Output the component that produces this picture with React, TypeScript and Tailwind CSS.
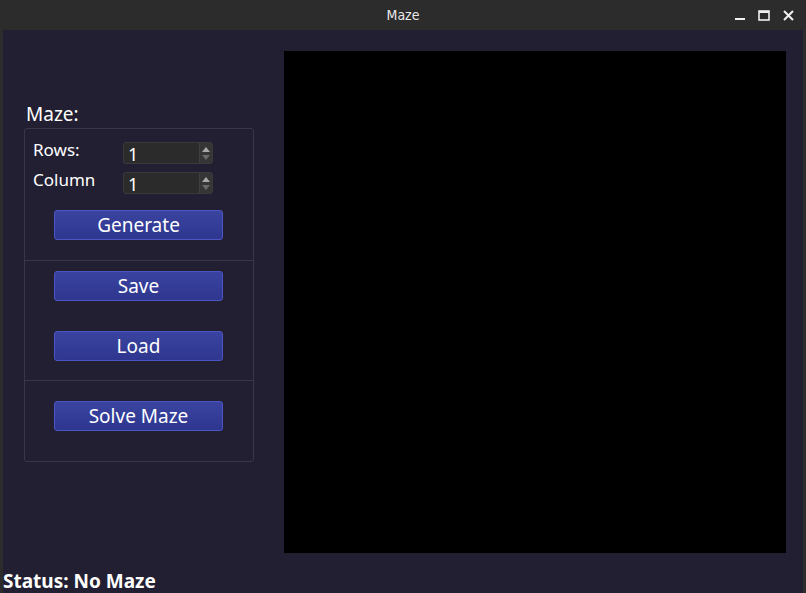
import React from "react";

const font = { fontFamily: '"Noto Sans", "Open Sans", sans-serif' };

function SpinBox({ value }: { value: number }) {
  return (
    <div className="flex h-[22px] w-[90px] rounded-[3px] border border-[#3a3a3a] bg-[#2b2b2b]">
      <div className="flex flex-1 items-center pl-[4px] pt-[2px] text-[18px] leading-none text-white">{value}</div>
      <div className="flex w-[13px] flex-col items-center justify-center gap-[3px] border-l border-[#3f3f3f] bg-[#353535]">
        <svg width="8" height="5" viewBox="0 0 8 5">
          <polygon points="0,5 4,0 8,5" fill="#a8a8a8" />
        </svg>
        <svg width="8" height="5" viewBox="0 0 8 5">
          <polygon points="0,0 8,0 4,5" fill="#6a6a6a" />
        </svg>
      </div>
    </div>
  );
}

function Button({ label }: { label: string }) {
  return (
    <button className="ml-[29px] h-[30px] w-[169px] rounded-[3px] border border-[#4b56c4] bg-gradient-to-b from-[#3a44a0] to-[#2e368f] text-[19px] leading-none text-white">
      {label}
    </button>
  );
}

export default function App() {
  return (
    <div className="flex h-[593px] w-[806px] flex-col overflow-hidden bg-[#2c2c2c]" style={font}>
      <div className="relative flex h-[30px] items-center justify-center">
        <span className="text-[14px] text-[#e8e8e8]" style={{ fontFamily: '"DejaVu Sans Condensed", "DejaVu Sans", sans-serif' }}>
          Maze
        </span>
        <div className="absolute right-[12px] top-[10px] flex items-end gap-[13px]">
          <svg width="10" height="11" viewBox="0 0 10 11">
            <rect x="0" y="8" width="10" height="2" fill="#f0f0f0" />
          </svg>
          <svg width="12" height="11" viewBox="0 0 12 11">
            <rect x="1" y="1" width="10" height="9" fill="none" stroke="#f0f0f0" strokeWidth="1.6" />
            <rect x="1" y="1" width="10" height="2" fill="#f0f0f0" />
          </svg>
          <svg width="11" height="11" viewBox="0 0 11 11">
            <path d="M1 1 L10 10 M10 1 L1 10" stroke="#f0f0f0" strokeWidth="2" />
          </svg>
        </div>
      </div>
      <div className="mx-[3px] flex flex-1 flex-col bg-[#231f33]">
        <div className="flex flex-1">
          <div className="ml-[21px] flex w-[230px] flex-col pt-[72px]">
            <div className="h-[26px] pl-[2px] text-[19px] leading-[24px] text-white">Maze:</div>
            <div className="flex flex-col rounded-[3px] border border-[#3a3646]">
              <div className="flex h-[132px] flex-col border-b border-[#3a3646] pt-[13px]">
                <div className="flex h-[22px] items-start">
                  <span className="-mt-[1px] w-[98px] pl-[8px] text-[17px] leading-[18px] text-white">Rows:</span>
                  <SpinBox value={1} />
                </div>
                <div className="mt-[8px] flex h-[22px] items-start">
                  <span className="-mt-[1px] w-[98px] pl-[8px] text-[17px] leading-[18px] text-white">Column</span>
                  <SpinBox value={1} />
                </div>
                <div className="mt-[16px]">
                  <Button label="Generate" />
                </div>
              </div>
              <div className="flex h-[120px] flex-col gap-[30px] border-b border-[#3a3646] pt-[10px]">
                <Button label="Save" />
                <Button label="Load" />
              </div>
              <div className="flex h-[80px] flex-col pt-[20px]">
                <Button label="Solve Maze" />
              </div>
            </div>
          </div>
          <div className="ml-[30px] mt-[21px] h-[502px] w-[502px] bg-black" />
        </div>
        <div className="h-[24px] text-[19px] font-bold leading-[24px] text-white">Status: No Maze</div>
      </div>
    </div>
  );
}
